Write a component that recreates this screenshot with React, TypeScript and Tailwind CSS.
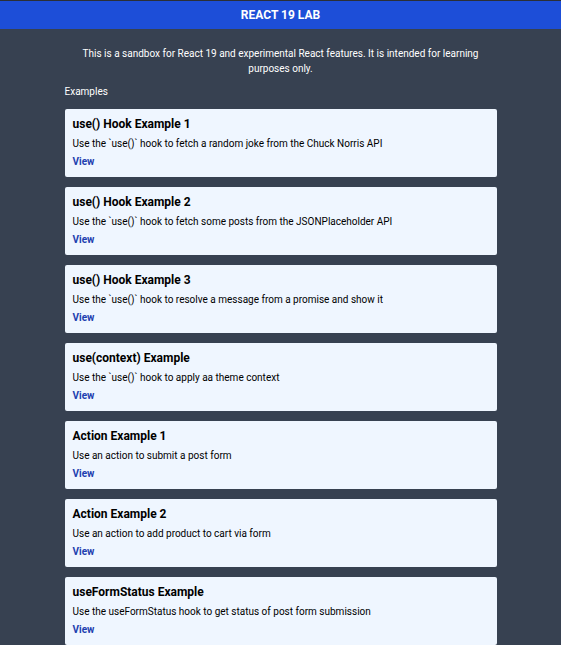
const examples = [
  { title: "use() Hook Example 1", desc: "Use the `use()` hook to fetch a random joke from the Chuck Norris API" },
  { title: "use() Hook Example 2", desc: "Use the `use()` hook to fetch some posts from the JSONPlaceholder API" },
  { title: "use() Hook Example 3", desc: "Use the `use()` hook to resolve a message from a promise and show it" },
  { title: "use(context) Example", desc: "Use the `use()` hook to apply aa theme context" },
  { title: "Action Example 1", desc: "Use an action to submit a post form" },
  { title: "Action Example 2", desc: "Use an action to add product to cart via form" },
  { title: "useFormStatus Example", desc: "Use the useFormStatus hook to get status of post form submission" },
];

export default function App() {
  return (
    <div className="min-h-screen border-t border-[#2b2f36] bg-[#374151] font-['Roboto',sans-serif]">
      <header className="flex h-[28px] items-center justify-center bg-[#1d4ed8]">
        <h1 className="text-[12px] font-bold text-white">REACT 19 LAB</h1>
      </header>
      <main className="mx-auto w-[432px] pt-[17px]">
        <p className="mx-auto w-[416px] text-center text-[10px] leading-[15px] text-white">
          This is a sandbox for React 19 and experimental React features. It is intended for learning purposes only.
        </p>
        <h2 className="mt-[9px] text-[10px] leading-[14px] text-white">Examples</h2>
        <ul className="mt-[10px] flex flex-col gap-[10px]">
          {examples.map((ex) => (
            <li key={ex.title} className="flex h-[68px] flex-col rounded-xs bg-[#eff6ff] px-2 pt-2">
              <h3 className="text-[12px] font-bold leading-[14px] text-black">{ex.title}</h3>
              <p className="mt-[6px] text-[10px] leading-[14px] text-black">{ex.desc}</p>
              <a href="#" className="mt-[4px] text-[10px] font-bold leading-[14px] text-[#1e40af]">
                View
              </a>
            </li>
          ))}
        </ul>
      </main>
    </div>
  );
}
